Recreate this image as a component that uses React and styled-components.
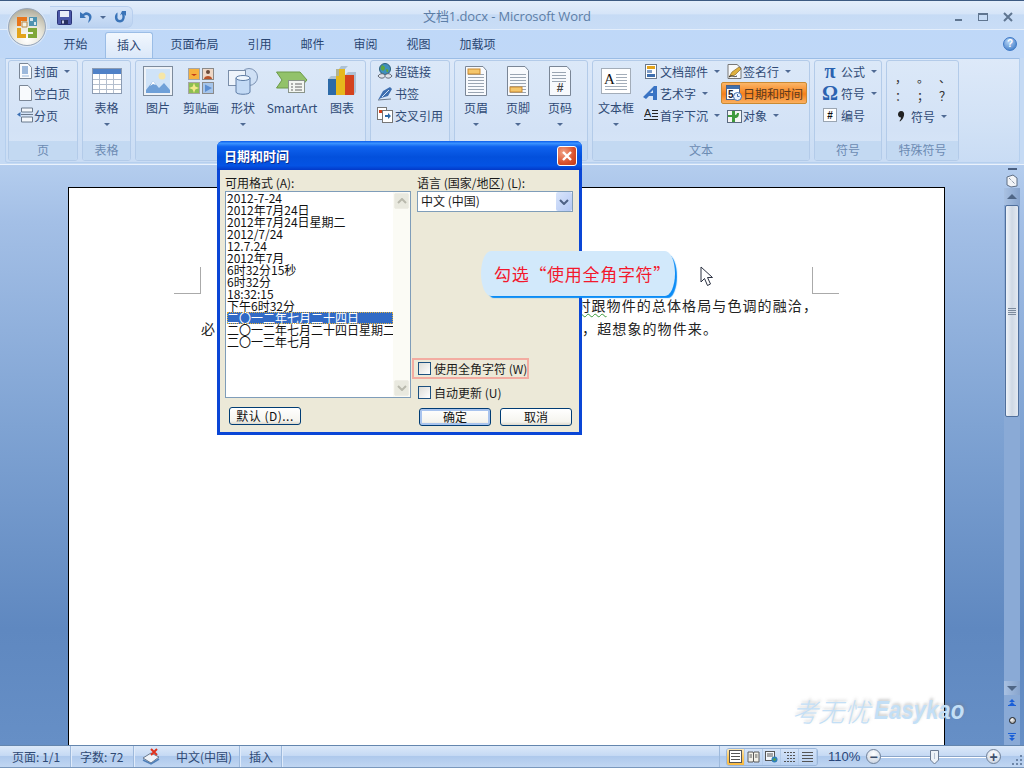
import React from "react";
import styled, { createGlobalStyle } from "styled-components";

const cjk = `"Noto Sans CJK SC", "Liberation Sans", sans-serif`;

const GlobalStyle = createGlobalStyle`
  html, body {
    margin: 0;
    padding: 0;
    overflow: hidden;
  }
  * {
    box-sizing: border-box;
  }
  body {
    font-family: ${cjk};
    font-size: 12px;
  }
`;

const Window = styled.div`
  position: relative;
  display: flex;
  flex-direction: column;
  width: 1024px;
  height: 768px;
  overflow: hidden;
  background: #c5daf4;
`;

/* title bar */
const TitleBar = styled.div`
  position: relative;
  display: flex;
  align-items: flex-start;
  height: 30px;
  padding-left: 50px;
  border-top: 1px solid #3c5a82;
  background: linear-gradient(#e3eefb, #d6e5f8 45%, #c6dbf5 50%, #c9ddf6);
  border-bottom: 1px solid #e4eefb;
`;
const OfficeButton = styled.div`
  position: absolute;
  left: 8px;
  top: 8px;
  width: 38px;
  height: 38px;
  border-radius: 50%;
  z-index: 3;
  display: flex;
  align-items: center;
  justify-content: center;
  background: radial-gradient(circle at 50% 85%, #ffffff, #e6e4d8 45%, #b9b5a5 80%, #8e8b80);
  border: 1px solid #9aa7b8;
  box-shadow: 0 0 0 1px #dbe7f6;
`;
const Qat = styled.div`
  display: flex;
  align-items: center;
  gap: 7px;
  width: 83px;
  height: 22px;
  margin-top: 5px;
  padding-left: 7px;
  border: 1px solid #b8cfee;
  border-left: none;
  border-radius: 0 6px 6px 0;
  background: linear-gradient(#d5e4f8, #bcd3f1);
`;
const TitleText = styled.div`
  position: absolute;
  left: 0;
  right: 0;
  top: 6px;
  padding-right: 10px;
  text-align: center;
  color: #5d7ea6;
  font-family: "Open Sans", ${cjk};
  font-size: 13px;
  line-height: 18px;
  letter-spacing: -0.1px;
`;
const WinControls = styled.div`
  position: absolute;
  right: 11px;
  top: 11px;
  display: flex;
  gap: 15px;
  align-items: center;
`;

/* tabs */
const TabRow = styled.div`
  position: relative;
  display: flex;
  align-items: flex-end;
  height: 28px;
  padding-left: 49px;
  background: linear-gradient(#bfd8f8, #c0d8f7);
`;
const Tab = styled.div`
  height: 26px;
  line-height: 23px;
  color: #2a4672;
  padding: 0 ${(p) => (p.$active ? "11px" : "14.5px")};
  margin: 0 ${(p) => (p.$active ? "3px" : "0")};
  ${(p) =>
    p.$active &&
    `
    background: linear-gradient(#f1f7fe, #dbe8f9);
    border: 1px solid #9bbde6;
    border-bottom: none;
    border-radius: 3px 3px 0 0;
  `}
`;
const HelpIcon = styled.div`
  position: absolute;
  right: 7px;
  top: 7px;
  width: 14px;
  height: 14px;
  border-radius: 50%;
  border: 1px solid #3d78c6;
  background: radial-gradient(circle at 40% 30%, #b8d6f7, #2f6fc0);
  color: #fff;
  font: bold 10px/12px "Liberation Sans", sans-serif;
  text-align: center;
`;

/* ribbon */
const Ribbon = styled.div`
  display: flex;
  gap: 4px;
  height: 105px;
  margin: 0 4px 0 5px;
  padding: 1px 0 0 2px;
  border: 1px solid #b5cfee;
  border-top-color: #9bbde6;
  border-radius: 0 0 3px 3px;
  background: linear-gradient(#dde9f9, #d2e2f6 60%, #c9dcf4);
`;
const Group = styled.div`
  display: flex;
  flex-direction: column;
  width: ${(p) => p.$w}px;
  height: 101px;
  border: 1px solid #b3cbe9;
  border-radius: 3px;
  background: linear-gradient(#dbe8f8, #d3e2f6 70%, #d8e6f8);
  overflow: hidden;
`;
const GroupBody = styled.div`
  flex: 1;
  display: flex;
`;
const GroupLabel = styled.div`
  height: 19px;
  line-height: 18px;
  text-align: center;
  background: #c3d9f2;
  color: #6c8bb2;
`;
const LargeBtn = styled.div`
  display: flex;
  flex-direction: column;
  align-items: center;
  width: ${(p) => p.$w}px;
  color: #2f4a75;
  flex-shrink: 0;
`;
const LargeIcon = styled.div`
  display: flex;
  align-items: center;
  justify-content: center;
  height: 40px;
`;
const LargeText = styled.div`
  height: 14px;
  line-height: 14px;
  white-space: nowrap;
`;
const Caret = styled.span`
  display: inline-block;
  width: 0;
  height: 0;
  border-left: 3px solid transparent;
  border-right: 3px solid transparent;
  border-top: 3px solid #4f6a94;
  margin-left: ${(p) => p.$ml ?? 0}px;
  margin-top: ${(p) => p.$mt ?? 0}px;
`;
const SmallCol = styled.div`
  display: flex;
  flex-direction: column;
  margin-top: -1px;
  padding-left: ${(p) => p.$pl ?? 0}px;
  width: ${(p) => (p.$w ? `${p.$w}px` : "auto")};
  flex-shrink: 0;
`;
const SmallBtn = styled.div`
  display: flex;
  align-items: center;
  height: 22px;
  color: #2f4a75;
  white-space: nowrap;
  ${(p) =>
    p.$hot &&
    `
    margin-left: -4px;
    padding-left: 3px;
    border: 1px solid #c98a33;
    border-radius: 2px;
    background: linear-gradient(#fbb668, #f88a28 45%, #f57f1c 55%, #fbb060);
    color: #5b3a20;
  `}
`;
const SmallIcon = styled.span`
  display: inline-flex;
  align-items: center;
  justify-content: center;
  width: ${(p) => p.$w ?? 18}px;
  margin-right: ${(p) => p.$mr ?? 0}px;
  flex-shrink: 0;
`;
const SymbolGlyph = styled.span`
  display: inline-block;
  width: 18px;
  text-align: center;
  color: #2a62b0;
  font: bold 20px/20px "Liberation Serif", serif;
`;
const PunctGrid = styled.div`
  display: grid;
  grid-template-columns: repeat(3, 22px);
  grid-auto-rows: 18px;
  padding: 9px 0 0 0;
  color: #333;
  font: 12px/18px "Noto Sans CJK SC", sans-serif;
  text-align: center;
`;

/* workspace */
const Workspace = styled.div`
  flex: 1;
  display: flex;
  min-height: 0;
  margin-top: 1px;
  border-top: 1px solid #eaf2fc;
  background: linear-gradient(#b4cdee, #a3bfe6 10%, #7fa3d3 45%, #5f88c0 80%, #668fc6);
`;
const Page = styled.div`
  width: 877px;
  margin: 22px 0 0 68px;
  padding-top: 79px;
  border: 1px solid #000;
  border-bottom: none;
  background: #fff;
  color: #222;
`;
const CropRow = styled.div`
  display: flex;
  justify-content: space-between;
  padding: 0 105px;
`;
const CropMark = styled.div`
  width: 27px;
  height: 27px;
  border-bottom: 1px solid #aaa;
  border-${(p) => p.$side}: 1px solid #aaa;
`;
const BodyText = styled.div`
  padding: 0 132px;
  font-size: 14px;
  line-height: 23px;
  letter-spacing: 1.1px;
`;
const LineRight = styled.div`
  text-align: right;
  margin-right: -6px;
  white-space: nowrap;
`;
const LineSplit = styled.div`
  display: flex;
  justify-content: space-between;
  padding-right: 94px;
  white-space: nowrap;
`;
const Squiggle = styled.span`
  text-decoration: underline wavy #3a9a3a 1px;
  text-underline-offset: 2px;
`;

/* word scrollbar */
const ScrollCol = styled.div`
  display: flex;
  flex-direction: column;
  align-items: center;
  width: 16px;
  margin: 0 4px 0 auto;
`;
const SplitHandle = styled.div`
  width: 9px;
  height: 2px;
  margin-top: 3px;
  background: #4a5f80;
`;
const RulerToggle = styled.div`
  margin-top: 4px;
  height: 14px;
`;
const ScrollBtn = styled.div`
  display: flex;
  align-items: center;
  justify-content: center;
  width: 16px;
  height: ${(p) => p.$h}px;
  background: linear-gradient(90deg, #a9c1e2, #87a4cd);
`;
const Triangle = styled.span`
  width: 0;
  height: 0;
  border-left: 5px solid transparent;
  border-right: 5px solid transparent;
  ${(p) => (p.$down ? "border-top" : "border-bottom")}: 5px solid #4f6686;
`;
const ScrollTrack = styled.div`
  flex: 1;
  width: 16px;
  background: #8aaad6;
  display: flex;
  flex-direction: column;
`;
const ScrollThumb = styled.div`
  display: flex;
  align-items: center;
  justify-content: center;
  height: 212px;
  margin: 0 1px;
  border: 1px solid #4f6f9c;
  border-radius: 2px;
  background: linear-gradient(90deg, #eef3f9, #cfd8e4 50%, #e3e9f1);
`;
const Grip = styled.div`
  width: 8px;
  height: 7px;
  background: repeating-linear-gradient(#7c8a9c 0 1px, transparent 1px 2px);
`;
const BrowseCol = styled.div`
  display: flex;
  flex-direction: column;
  align-items: center;
  justify-content: space-between;
  height: 50px;
  width: 16px;
  padding: 3px 0 3px;
  background: #8aaad6;
`;
const Ball = styled.div`
  width: 7px;
  height: 7px;
  border-radius: 50%;
  border: 1px solid #222;
  background: radial-gradient(circle at 35% 30%, #fff, #888);
`;

/* status bar */
const StatusBar = styled.div`
  display: flex;
  align-items: center;
  height: 23px;
  padding-left: 3px;
  border-top: 1px solid #6486ae;
  border-bottom: 1px solid #7a98bd;
  background: linear-gradient(#dbe8f9, #c6daf4 45%, #aec9ec 50%, #c1d6f2);
  color: #2f4a75;
`;
const StatusCell = styled.div`
  display: flex;
  align-items: center;
  width: ${(p) => p.$w}px;
  height: 21px;
  padding-left: ${(p) => p.$pl ?? 9}px;
  border-right: 1px solid #9db9dc;
  box-shadow: 1px 0 0 #e0ebfa;
  white-space: nowrap;
`;
const StatusRight = styled.div`
  display: flex;
  align-items: center;
  height: 21px;
  margin-left: auto;
  padding-left: 6px;
  width: 305px;
  border-left: 1px solid #9db9dc;
`;
const ViewGroup = styled.div`
  display: flex;
  height: 18px;
  border: 1px solid #9ab6da;
  border-radius: 3px;
  overflow: hidden;
`;
const ViewBtn = styled.div`
  display: flex;
  align-items: center;
  justify-content: center;
  width: 18px;
  border-right: 1px solid #b3cbe9;
  background: ${(p) =>
    p.$on ? "linear-gradient(#fde9b8, #fbc85f 50%, #f9b93f)" : "linear-gradient(#d5e4f8, #b8d0f0)"};
`;
const ZoomLabel = styled.div`
  width: 48px;
  padding-left: 10px;
  color: #29477a;
  font: 13px "Liberation Sans", sans-serif;
`;
const ZoomRound = styled.div`
  display: flex;
  align-items: center;
  justify-content: center;
  flex-shrink: 0;
  width: 15px;
  height: 15px;
  border: 1px solid #6f8098;
  border-radius: 50%;
  background: radial-gradient(circle at 50% 30%, #fff, #c3cede);
  color: #3d4f6b;
  font: bold 14px/12px "Liberation Sans", sans-serif;
`;
const ZoomTrack = styled.div`
  position: relative;
  width: 105px;
  height: 2px;
  flex-shrink: 0;
  background: #fff;
  border-top: 1px solid #8ba6c9;
`;
const ZoomThumb = styled.div`
  position: absolute;
  left: 49px;
  top: -7px;
`;
const ResizeGrip = styled.div`
  margin-left: 10px;
  margin-top: 6px;
`;

/* dialog */
const Dialog = styled.div`
  position: absolute;
  left: 217px;
  top: 141px;
  width: 365px;
  height: 294px;
  display: flex;
  flex-direction: column;
  z-index: 5;
  border-radius: 6px 6px 0 0;
  background: #0a46d6;
  padding: 0 3px 3px;
  font-family: ${cjk};
`;
const DialogTitle = styled.div`
  display: flex;
  align-items: center;
  justify-content: space-between;
  height: 29px;
  margin: 0 -3px;
  padding: 0 5px 0 7px;
  border-radius: 6px 6px 0 0;
  background: linear-gradient(#0a5cec, #3a93ff 8%, #0f62ee 20%, #0350dc 55%, #0453e4 85%, #0339c8);
  color: #fff;
  font-size: 13px;
  font-weight: 700;
  text-shadow: 1px 1px 0 #0b2c8c;
`;
const CloseBtn = styled.div`
  display: flex;
  align-items: center;
  justify-content: center;
  width: 20px;
  height: 20px;
  border: 1px solid #fff;
  border-radius: 3px;
  background: radial-gradient(circle at 30% 30%, #f2a285, #d8502c 60%, #c03a18);
`;
const DialogBody = styled.div`
  flex: 1;
  display: flex;
  gap: 6px;
  padding: 6px 0 0 5px;
  background: #ece9d8;
  color: #1a1a1a;
`;
const LeftCol = styled.div`
  width: 186px;
  flex-shrink: 0;
`;
const RightCol = styled.div`
  width: 156px;
  flex-shrink: 0;
`;
const FieldLabel = styled.div`
  height: 15px;
  line-height: 14px;
  white-space: nowrap;
`;
const ListBox = styled.div`
  display: flex;
  height: 207px;
  border: 1px solid #7f9db9;
  background: #fff;
`;
const ListItems = styled.div`
  flex: 1;
  min-width: 0;
  padding-left: 1px;
  overflow-x: clip;
`;
const ListItem = styled.div`
  height: 12px;
  line-height: 11px;
  white-space: nowrap;
  color: ${(p) => (p.$sel ? "#fff" : "#111")};
  background: ${(p) => (p.$sel ? "#316ac5" : "transparent")};
  outline: ${(p) => (p.$sel ? "1px dotted #e0b040" : "none")};
  outline-offset: -1px;
`;
const ListScroll = styled.div`
  display: flex;
  flex-direction: column;
  justify-content: space-between;
  width: 17px;
  padding: 1px;
  background: #fbfbf5;
`;
const ListScrollBtn = styled.div`
  display: flex;
  align-items: center;
  justify-content: center;
  height: 16px;
  border: 1px solid #eeede5;
  border-radius: 2px;
  background: #e9e9df;
`;
const SelectBox = styled.div`
  display: flex;
  align-items: center;
  justify-content: space-between;
  height: 21px;
  padding: 0 0 2px 3px;
  border: 1px solid #7f9db9;
  background: #fff;
`;
const SelectArrow = styled.div`
  display: flex;
  align-items: center;
  justify-content: center;
  width: 16px;
  height: 19px;
  margin-bottom: -2px;
  border-radius: 2px;
  background: linear-gradient(135deg, #d9e5fb, #b3c8f4);
`;
const CheckRow = styled.div`
  display: flex;
  align-items: center;
  height: ${(p) => (p.$mark ? 21 : 14)}px;
  width: ${(p) => (p.$mark ? "117px" : "auto")};
  margin: ${(p) => (p.$mark ? "146px 0 0 -5px" : "6px 0 0 1px")};
  padding-left: ${(p) => (p.$mark ? 4 : 0)}px;
  border: ${(p) => (p.$mark ? "2px solid #f3aca1" : "none")};
  white-space: nowrap;
`;
const CheckBox = styled.span`
  width: 13px;
  height: 13px;
  margin-right: 3px;
  flex-shrink: 0;
  border: 1px solid #1c5180;
  background: linear-gradient(135deg, #dcdcd7, #fff);
`;
const ButtonRow = styled.div`
  display: flex;
  gap: 9px;
  margin: 9px 0 0 2px;
`;
const DlgButton = styled.div`
  width: 72px;
  height: 18px;
  line-height: 15px;
  text-align: center;
  border: 1px solid #003c74;
  border-radius: 3px;
  color: #111;
  background: linear-gradient(#fff, #f5f4ee 80%, #dcd8cc);
  box-shadow: ${(p) => (p.$primary ? "inset 0 0 0 2px #a9c4ee" : "none")};
`;
const DefaultButton = styled(DlgButton)`
  margin: 9px 0 0 4px;
  letter-spacing: 0.5px;
`;

/* overlay on dialog */
const Callout = styled.div`
  position: absolute;
  left: 481px;
  top: 251px;
  width: 194px;
  height: 45px;
  z-index: 6;
  display: flex;
  align-items: center;
  padding-left: 13px;
  border-radius: 10px / 50%;
  background: #d2e9fb;
  box-shadow: 3px 3px 1px -1px #0b8cf6;
  color: #f3182c;
  font-size: 17px;
  letter-spacing: 0.7px;
  white-space: nowrap;
`;
const Cursor = styled.div`
  position: absolute;
  left: 700px;
  top: 266px;
  z-index: 6;
`;
const Watermark = styled.div`
  position: absolute;
  left: 792px;
  top: 692px;
  z-index: 4;
  display: flex;
  align-items: center;
  gap: 4px;
  color: #c3dff6;
  white-space: nowrap;
  text-shadow: 1px -2px 3px rgba(120, 120, 120, 0.35);
`;
const WmCn = styled.span`
  font-size: 26px;
  font-style: italic;
  font-weight: 300;
`;
const WmEn = styled.span`
  display: inline-block;
  font: italic bold 25px "Liberation Sans", sans-serif;
  transform: scaleX(0.89);
  transform-origin: left center;
`;

/* icons */
const Ico = ({ w, h = w, children }) => (
  <svg width={w} height={h} viewBox={`0 0 ${w} ${h}`} style={{ display: "block" }}>
    {children}
  </svg>
);

const Sheet = ({ w = 13, h = 16, children }) => (
  <Ico w={w} h={h}>
    <path d={`M.5.5H${w - 4}L${w - 0.5} 4.5V${h - 0.5}H.5Z`} fill="#f8fafd" stroke="#7a8696" />
    {children}
  </Ico>
);

const OfficeLogo = () => (
  <Ico w={28}>
    <path d="M4 4H14V8H8V13H4Z" fill="#e8761c" />
    <path d="M4 15H8V21H13V25H4Z" fill="#e3a41c" />
    <path d="M15 15H24V25H15V21H20V19H15Z" fill="#7fa83a" />
    <rect x="16" y="4" width="8" height="9" fill="#4f93b0" />
    <path d="M17 5h3v3h-3zM21 9h2v3h-2z" fill="#d8e8ee" />
    <path d="M9 9H14V14H9Z" fill="#f4f1e6" stroke="#b98b4c" />
  </Ico>
);

const SaveIcon = () => (
  <Ico w={15}>
    <rect x=".5" y=".5" width="14" height="14" rx="1" fill="#4b57a8" stroke="#2b3478" />
    <rect x="3" y="1" width="9" height="6" fill="#e8ecf8" />
    <rect x="4" y="10" width="7" height="4" fill="#27305f" />
    <rect x="5" y="10.5" width="2" height="3" fill="#c4cbe6" />
  </Ico>
);
const UndoIcon = () => (
  <Ico w={14}>
    <path d="M1 2V8H7L5 6C7 4 11 5 10 9L9 13C13 10 14 5 10 3 8 2 6 2 4 4Z" fill="#3a74b8" />
  </Ico>
);
const RedoIcon = () => (
  <Ico w={14}>
    <path d="M9 1L13 1V6L11.500 4.500C12.500 8 11 12.500 7 12.500 3 12.500 1.500 9 2 6 2.500 4 3.500 3 4.500 2.500V6C4 8 5 10 7 10 9.500 10 10 6.500 8.800 4L7 5.500Z" fill="#3a74b8" />
  </Ico>
);

const CoverIcon = () => (
  <Sheet>
    <rect x="3" y="3" width="6" height="8" fill="#9db9dc" />
    <path d="M3 13H10" stroke="#9db9dc" />
  </Sheet>
);
const BlankIcon = () => <Sheet />;
const BreakIcon = () => (
  <Ico w={16}>
    <path d="M4.500 1H15.500V5H4.500ZM4.500 10H15.500V15H4.500Z" fill="#f4f7fb" stroke="#6b7a8d" />
    <path d="M4 7.500H16" stroke="#6b7a8d" />
    <path d="M0 7.500L3.500 5V10Z" fill="#3b6fb2" />
  </Ico>
);
const TableIcon = () => (
  <Ico w={30} h={26}>
    <rect x=".5" y=".5" width="29" height="25" fill="#fff" stroke="#8c9cb3" />
    <rect x="1" y="1" width="28" height="5" fill="#4f81c7" />
    {[7, 14, 21].map((x) => (
      <path key={x} d={`M${x + 0.5} 6V25`} stroke="#b4bfce" />
    ))}
    {[11, 16, 21].map((y) => (
      <path key={y} d={`M1 ${y + 0.5}H29`} stroke="#b4bfce" />
    ))}
  </Ico>
);
const PictureIcon = () => (
  <Ico w={30}>
    <rect x=".5" y=".5" width="29" height="29" fill="#eef2f7" stroke="#7d8b9c" />
    <rect x="3" y="3" width="24" height="24" fill="#cfe3f8" />
    <circle cx="19" cy="10" r="3.500" fill="#f6e6a8" />
    <path d="M3 24L10 15 16 22 21 17 27 24V27H3Z" fill="#6fa0d8" />
    <path d="M7 20L10 15 13 19 10 18Z" fill="#fff" />
  </Ico>
);
const ClipIcon = () => (
  <Ico w={26}>
    <rect x=".5" y=".5" width="11" height="11" fill="#f6b13e" stroke="#a5a5a5" />
    <path d="M3 6H9L6 8Z" fill="#c23d1a" />
    <rect x="14.500" y=".5" width="11" height="11" fill="#eed7c6" stroke="#8a8a8a" />
    <circle cx="20" cy="4" r="2" fill="#6b4a3a" />
    <path d="M16 11C16 7 24 7 24 11Z" fill="#b8532a" />
    <rect x=".5" y="14.500" width="11" height="11" fill="#8ebf52" stroke="#a5a5a5" />
    <path d="M6 15L8 20 6 25 4 20Z M1 20L6 18 11 20 6 22Z" fill="#f3e88a" />
    <rect x="14.500" y="14.500" width="11" height="11" fill="#a6c5ea" stroke="#8a8a8a" />
    <path d="M17 16.500L24 20 17 24Z" fill="#5d8fd2" />
  </Ico>
);
const ShapesIcon = () => (
  <Ico w={30} h={28}>
    <circle cx="21" cy="10" r="8.500" fill="#cfe0f5" stroke="#7d93b3" />
    <rect x=".5" y="3.500" width="17" height="15" fill="#eef4fb" stroke="#7a8ea9" />
    <path d="M8 11V25C8 28 22 28 22 25V11Z" fill="#c3daf5" stroke="#5e7da6" />
    <ellipse cx="15" cy="11" rx="7" ry="2.500" fill="#eef6fe" stroke="#5e7da6" />
  </Ico>
);
const SmartArtIcon = () => (
  <Ico w={32} h={26}>
    <path d="M.5 4H24L31 12 24 20H.5L6 12Z" fill="#92c26a" stroke="#6c9a48" />
    <rect x="12.500" y="12.500" width="16" height="12" fill="#f3f6f1" stroke="#8a948a" />
    <path d="M15 16h2M19 16h7M15 19h2M19 19h7M15 22h2M19 22h7" stroke="#666" />
  </Ico>
);
const ChartIcon = () => (
  <Ico w={28} h={30}>
    <rect x="0" y="13" width="8" height="16" fill="#2c6aa8" />
    <rect x="8" y="3" width="9" height="26" fill="#e6b81c" />
    <rect x="17" y="9" width="9" height="20" fill="#d4421e" />
    <path d="M0 13L3 10H11V3L13 0H20L17 3H8V13ZM17 9L20 6H28L26 9ZM26 9L28 6V26L26 29Z" fill="#9ab0c4" opacity=".7" />
  </Ico>
);
const GlobeIcon = () => (
  <Ico w={16}>
    <circle cx="8" cy="6" r="5.500" fill="#3e8fbd" stroke="#2b5f7c" />
    <path d="M5 2C8 3 9 5 7 7 6 9 4 7 3.500 5ZM9 6C11 6 12 7 11 9 10 10 9 8 9 6Z" fill="#5ca53f" />
    <path d="M1 13C3 10 7 10 8 12.500 9.500 10 13 10 15 13 13 16 9.500 15.500 8 13.500 7 15.500 3 16 1 13Z" fill="#dfe3ea" stroke="#5a6270" />
  </Ico>
);
const BookmarkIcon = () => (
  <Ico w={16}>
    <path d="M1 15L6 6 13 2 15 4 11 11 4 13Z" fill="#3e6fb0" />
    <path d="M5 12L12 5" stroke="#cfe0f5" />
    <path d="M1 15L14 14" stroke="#6b7a8d" />
  </Ico>
);
const CrossRefIcon = () => (
  <Ico w={16}>
    <rect x=".5" y=".5" width="9" height="12" fill="#fff" stroke="#777" />
    <rect x="5.500" y="3.500" width="10" height="12" fill="#fff" stroke="#777" />
    <path d="M2 3h3v3H2z" fill="#d4421e" />
    <path d="M8 8H11V6L14 9 11 12V10H8Z" fill="#2c6aa8" />
  </Ico>
);
const HeaderIcon = ({ band }) => (
  <Sheet w={22} h={30}>
    {[8, 11, 14, 17, 20, 23, 26].map((y) => (
      <path key={y} d={`M3 ${y + 0.5}H19`} stroke="#9aa5b2" />
    ))}
    <rect x="3" y={band} width="12" height="5" fill="#f5c66b" stroke="#c98a33" />
  </Sheet>
);
const PageNumIcon = () => (
  <Sheet w={22} h={30}>
    {[6, 9, 12, 15].map((y) => (
      <path key={y} d={`M3 ${y + 0.5}H17`} stroke="#9aa5b2" />
    ))}
    <text x="11" y="26" textAnchor="middle" fontSize="12" fontWeight="700" fill="#444" fontFamily="Liberation Sans">
      #
    </text>
  </Sheet>
);
const TextBoxIcon = () => (
  <Ico w={30} h={26}>
    <rect x=".5" y=".5" width="29" height="25" fill="#fff" stroke="#a3adb9" />
    <text x="3" y="16" fontSize="15" fontFamily="Liberation Serif" fill="#111">
      A
    </text>
    {[6, 9, 12, 15, 18, 21].map((y) => (
      <path key={y} d={`M${y > 15 ? 4 : 15} ${y + 0.5}H26`} stroke="#a3adb9" />
    ))}
  </Ico>
);
const QuickPartsIcon = () => (
  <Ico w={12} h={15}>
    <rect x=".5" y=".5" width="11" height="14" fill="#fff" stroke="#6b7a8d" />
    <rect x="2" y="2" width="8" height="3" fill="#e3a41c" />
    <rect x="2" y="6" width="5" height="3" fill="#7f9ec8" />
    <rect x="2" y="10" width="8" height="3" fill="#3f6fae" />
  </Ico>
);
const WordArtIcon = () => (
  <Ico w={16}>
    <path d="M0 12L11 1H14V15H10V11H6L3 14ZM10 8V5L7 8Z" fill="#3a74c4" />
  </Ico>
);
const DropCapIcon = () => (
  <Ico w={14}>
    <text x="0" y="9" fontSize="11" fontFamily="Liberation Sans" fill="#222">
      A
    </text>
    <path d="M8 2.500H14M8 5.500H14M8 8.500H14M0 11.500H14M0 14.500H14" stroke="#222" />
  </Ico>
);
const SignIcon = () => (
  <Ico w={15}>
    <path d="M1 .5H10L14 4V14.500H1Z" fill="#f7f9fb" stroke="#777" />
    <path d="M2 13L5 8 12 3 14 5 8 11Z" fill="#dfb13f" stroke="#7a5a18" strokeWidth=".6" />
    <path d="M2 13C5 10 6 14 10 12" stroke="#333" fill="none" />
  </Ico>
);
const DateIcon = () => (
  <Ico w={16}>
    <rect x=".5" y=".5" width="13" height="14" fill="#fff" stroke="#48628a" />
    <rect x="1" y="1" width="12" height="3" fill="#3f6fae" />
    <text x="2" y="13" fontSize="10" fontWeight="700" fontFamily="Liberation Sans" fill="#223">
      5
    </text>
    <circle cx="11.500" cy="11.500" r="4" fill="#e9f1fb" stroke="#3f6fae" />
    <path d="M11.500 9V11.500H13.500" stroke="#3f6fae" fill="none" />
  </Ico>
);
const ObjectIcon = () => (
  <Ico w={15}>
    <rect x=".5" y="2.500" width="14" height="12" fill="#f4f4f4" stroke="#5a6a80" />
    <path d="M5 3V7H1V9H5V14H8V10C11 10 12 8 12 5H10C10 6 9 7 8 7V3Z" fill="#3f9a3c" />
  </Ico>
);
const NumberIcon = () => (
  <Ico w={14}>
    <rect x=".5" y=".5" width="13" height="13" fill="#fff" stroke="#9aa5b2" />
    <text x="7" y="11" textAnchor="middle" fontSize="10" fontWeight="700" fontFamily="Liberation Sans" fill="#111">
      #
    </text>
  </Ico>
);
const CommaMark = () => (
  <Ico w={8} h={12}>
    <path d="M4 1C6.500 1 7.500 3 7 5.500 6.500 8 5 10 3 11.500L2.500 11C3.500 9.500 4 8.500 4 7.500 2 7.500 1 6 1 4.500 1 2.500 2.500 1 4 1Z" fill="#222" />
  </Ico>
);
const Chevron = ({ color = "#4d6185", up }) => (
  <Ico w={10} h={6}>
    <path d={up ? "M1 5L5 1 9 5" : "M1 1L5 5 9 1"} stroke={color} strokeWidth="2" fill="none" />
  </Ico>
);
const CloseX = () => (
  <Ico w={12}>
    <path d="M2 2L10 10M10 2L2 10" stroke="#fff" strokeWidth="2.400" />
  </Ico>
);
const RulerIcon = () => (
  <Ico w={12} h={14}>
    <path d="M1 3L7 1 11 4 11 12 5 13 1 11Z" fill="#f2f4f7" stroke="#5f6e84" />
    <path d="M3 4L9 10" stroke="#5f6e84" strokeDasharray="1 1" />
  </Ico>
);
const DoubleArrow = ({ down }) => (
  <Ico w={10} h={9}>
    <path
      d={down ? "M1 0H9V1H1ZM2 2H8L5 5ZM2 5H8L5 8Z" : "M2 4H8L5 1ZM1 8H9V7H1Z M2 7H8L5 4Z"}
      fill="#1a5fd8"
    />
  </Ico>
);
const SpellIcon = () => (
  <Ico w={18}>
    <path d="M1 10L9 5 17 9 9 15Z" fill="#eef2f8" stroke="#6b7a8d" />
    <path d="M1 12L9 16 17 11" stroke="#4f7fb8" fill="none" strokeWidth="1.500" />
    <path d="M9 1L15 7M15 1L9 7" stroke="#e0321c" strokeWidth="2" />
  </Ico>
);
const ViewLines = ({ kind }) => (
  <Ico w={13} h={13}>
    {kind === "book" ? (
      <>
        <path d="M1 2H6L6.500 3 7 2H12V12H7L6.500 11 6 12H1Z" fill="#f3f1e8" stroke="#5a5a5a" />
        <path d="M6.500 3V11M2.500 5H5M2.500 7H5M8 5H10.500M8 7H10.500" stroke="#5a5a5a" />
      </>
    ) : kind === "web" ? (
      <>
        <rect x=".5" y="1.500" width="9" height="9" fill="#f4f7fb" stroke="#555" />
        <path d="M2 4H8M2 6H8" stroke="#555" />
        <circle cx="9.500" cy="9.500" r="3" fill="#2f80b8" />
        <path d="M8 9L10 8 11 10 9 11Z" fill="#5ca53f" />
      </>
    ) : kind === "outline" ? (
      <path d="M1 2.500H12M4 5.500H12M4 8.500H12M1 11.500H12" stroke="#555" strokeDasharray="2 1" />
    ) : kind === "draft" ? (
      <path d="M1 2.500H12M1 5.500H12M1 8.500H12M1 11.500H12" stroke="#555" />
    ) : (
      <>
        <rect x=".5" y=".5" width="12" height="12" fill="#fff" stroke="#555" />
        <path d="M2 3.500H11M2 6.500H11M2 9.500H11" stroke="#555" />
      </>
    )}
  </Ico>
);
const SliderThumb = () => (
  <Ico w={9} h={15}>
    <path d="M.5.5H8.500V10L4.500 14 .5 10Z" fill="#eef3f9" stroke="#6a7a92" />
    <path d="M4.500 3V9" stroke="#b6c2d3" />
  </Ico>
);
const GripDots = () => (
  <Ico w={12} h={12}>
    {[
      [9, 1],
      [5, 5],
      [9, 5],
      [1, 9],
      [5, 9],
      [9, 9],
    ].map(([x, y]) => (
      <rect key={`${x}-${y}`} x={x} y={y} width="2" height="2" fill="#6d86a8" />
    ))}
  </Ico>
);
const Arrow = () => (
  <Ico w={14} h={21}>
    <path d="M1 1V16L4.500 12.500 7.500 19.500 10.500 18 7.500 11.500H12.500Z" fill="#fff" stroke="#2a3040" />
  </Ico>
);

const tabs = ["开始", "插入", "页面布局", "引用", "邮件", "审阅", "视图", "加载项"];
const formats = [
  "2012-7-24",
  "2012年7月24日",
  "2012年7月24日星期二",
  "2012/7/24",
  "12.7.24",
  "2012年7月",
  "6时32分15秒",
  "6时32分",
  "18:32:15",
  "下午6时32分",
  "二〇一二年七月二十四日",
  "二〇一二年七月二十四日星期二",
  "二〇一二年七月",
];

function Large({ w = 42, icon, label, caret }) {
  return (
    <LargeBtn $w={w}>
      <LargeIcon>{icon}</LargeIcon>
      <LargeText>{label}</LargeText>
      {caret && <Caret $mt={8} />}
    </LargeBtn>
  );
}

function Small({ icon, label, caret, hot, iconW, iconMr, caretMl = 6 }) {
  return (
    <SmallBtn $hot={hot}>
      <SmallIcon $w={iconW} $mr={iconMr}>
        {icon}
      </SmallIcon>
      {label}
      {caret && <Caret $ml={caretMl} />}
    </SmallBtn>
  );
}

function RibbonBar() {
  return (
    <Ribbon>
      <Group $w={70}>
        <GroupBody>
          <SmallCol $pl={7}>
            <Small icon={<CoverIcon />} label="封面" caret />
            <Small icon={<BlankIcon />} label="空白页" />
            <Small icon={<BreakIcon />} label="分页" />
          </SmallCol>
        </GroupBody>
        <GroupLabel>页</GroupLabel>
      </Group>
      <Group $w={49}>
        <GroupBody>
          <Large w={47} icon={<TableIcon />} label="表格" caret />
        </GroupBody>
        <GroupLabel>表格</GroupLabel>
      </Group>
      <Group $w={231}>
        <GroupBody>
          <Large w={44} icon={<PictureIcon />} label="图片" />
          <Large icon={<ClipIcon />} label="剪贴画" />
          <Large icon={<ShapesIcon />} label="形状" caret />
          <Large w={56} icon={<SmartArtIcon />} label="SmartArt" />
          <Large w={44} icon={<ChartIcon />} label="图表" />
        </GroupBody>
        <GroupLabel />
      </Group>
      <Group $w={80}>
        <GroupBody>
          <SmallCol $pl={5}>
            <Small icon={<GlobeIcon />} label="超链接" iconMr={1} />
            <Small icon={<BookmarkIcon />} label="书签" iconMr={1} />
            <Small icon={<CrossRefIcon />} label="交叉引用" iconMr={1} />
          </SmallCol>
        </GroupBody>
        <GroupLabel />
      </Group>
      <Group $w={134}>
        <GroupBody>
          <Large icon={<HeaderIcon band={3} />} label="页眉" caret />
          <Large icon={<HeaderIcon band={21} />} label="页脚" caret />
          <Large icon={<PageNumIcon />} label="页码" caret />
        </GroupBody>
        <GroupLabel />
      </Group>
      <Group $w={218}>
        <GroupBody>
          <Large w={46} icon={<TextBoxIcon />} label="文本框" caret />
          <SmallCol $w={86} $pl={2}>
            <Small icon={<QuickPartsIcon />} label="文档部件" caret iconW={19} />
            <Small icon={<WordArtIcon />} label="艺术字" caret iconW={19} />
            <Small icon={<DropCapIcon />} label="首字下沉" caret iconW={19} />
          </SmallCol>
          <SmallCol $w={82}>
            <Small icon={<SignIcon />} label="签名行" caret />
            <Small icon={<DateIcon />} label="日期和时间" hot />
            <Small icon={<ObjectIcon />} label="对象" caret />
          </SmallCol>
        </GroupBody>
        <GroupLabel>文本</GroupLabel>
      </Group>
      <Group $w={68}>
        <GroupBody>
          <SmallCol $pl={6}>
            <Small icon={<SymbolGlyph>π</SymbolGlyph>} label="公式" caret iconMr={2} />
            <Small icon={<SymbolGlyph>Ω</SymbolGlyph>} label="符号" caret iconMr={2} />
            <Small icon={<NumberIcon />} label="编号" iconMr={2} />
          </SmallCol>
        </GroupBody>
        <GroupLabel>符号</GroupLabel>
      </Group>
      <Group $w={73}>
        <GroupBody>
          <SmallCol $pl={3}>
            <PunctGrid>
              {["，", "。", "、", "：", "；", "？"].map((c) => (
                <span key={c}>{c}</span>
              ))}
            </PunctGrid>
            <Small icon={<CommaMark />} label="符号" caret iconW={21} />
          </SmallCol>
        </GroupBody>
        <GroupLabel>特殊符号</GroupLabel>
      </Group>
    </Ribbon>
  );
}

function DateDialog() {
  return (
    <Dialog>
      <DialogTitle>
        日期和时间
        <CloseBtn>
          <CloseX />
        </CloseBtn>
      </DialogTitle>
      <DialogBody>
        <LeftCol>
          <FieldLabel>可用格式 (A):</FieldLabel>
          <ListBox>
            <ListItems>
              {formats.map((f, i) => (
                <ListItem key={f} $sel={i === 10}>
                  {f}
                </ListItem>
              ))}
            </ListItems>
            <ListScroll>
              <ListScrollBtn>
                <Chevron color="#b9b9ad" up />
              </ListScrollBtn>
              <ListScrollBtn>
                <Chevron color="#b9b9ad" />
              </ListScrollBtn>
            </ListScroll>
          </ListBox>
          <DefaultButton>默认 (D)...</DefaultButton>
        </LeftCol>
        <RightCol>
          <FieldLabel>语言 (国家/地区) (L):</FieldLabel>
          <SelectBox>
            中文 (中国)
            <SelectArrow>
              <Chevron />
            </SelectArrow>
          </SelectBox>
          <CheckRow $mark>
            <CheckBox />
            使用全角字符 (W)
          </CheckRow>
          <CheckRow>
            <CheckBox />
            自动更新 (U)
          </CheckRow>
          <ButtonRow>
            <DlgButton $primary>确定</DlgButton>
            <DlgButton>取消</DlgButton>
          </ButtonRow>
        </RightCol>
      </DialogBody>
    </Dialog>
  );
}

export default function App() {
  return (
    <Window>
      <GlobalStyle />
      <OfficeButton>
        <OfficeLogo />
      </OfficeButton>
      <TitleBar>
        <Qat>
          <SaveIcon />
          <UndoIcon />
          <Caret />
          <RedoIcon />
        </Qat>
        <TitleText>文档1.docx - Microsoft Word</TitleText>
        <WinControls>
          <Ico w={9}>
            <rect x="1" y="6" width="7" height="2" fill="#5f7590" />
          </Ico>
          <Ico w={10}>
            <rect x=".5" y="1.500" width="9" height="7" fill="none" stroke="#5f7590" />
            <rect x="1" y="1" width="8" height="2" fill="#5f7590" />
          </Ico>
          <Ico w={10}>
            <path d="M1 1L9 9M9 1L1 9" stroke="#5f7590" strokeWidth="2" />
          </Ico>
        </WinControls>
      </TitleBar>
      <TabRow>
        {tabs.map((t) => (
          <Tab key={t} $active={t === "插入"}>
            {t}
          </Tab>
        ))}
        <HelpIcon>?</HelpIcon>
      </TabRow>
      <RibbonBar />
      <Workspace>
        <Page>
          <CropRow>
            <CropMark $side="right" />
            <CropMark $side="left" />
          </CropRow>
          <BodyText>
            <LineRight>
              <Squiggle>时跟</Squiggle>物件的总体格局与色调的融洽，
            </LineRight>
            <LineSplit>
              <span>必</span>
              <span>，超想象的物件来。</span>
            </LineSplit>
          </BodyText>
        </Page>
        <ScrollCol>
          <SplitHandle />
          <RulerToggle>
            <RulerIcon />
          </RulerToggle>
          <ScrollBtn $h={17}>
            <Triangle />
          </ScrollBtn>
          <ScrollTrack>
            <ScrollThumb>
              <Grip />
            </ScrollThumb>
          </ScrollTrack>
          <ScrollBtn $h={14}>
            <Triangle $down />
          </ScrollBtn>
          <BrowseCol>
            <DoubleArrow />
            <Ball />
            <DoubleArrow down />
          </BrowseCol>
        </ScrollCol>
      </Workspace>
      <StatusBar>
        <StatusCell $w={68}>页面: 1/1</StatusCell>
        <StatusCell $w={63}>字数: 72</StatusCell>
        <StatusCell $w={106} $pl={8}>
          <SmallIcon $w={18} $mr={16}>
            <SpellIcon />
          </SmallIcon>
          中文(中国)
        </StatusCell>
        <StatusCell $w={42}>插入</StatusCell>
        <StatusRight>
          <ViewGroup>
            <ViewBtn $on>
              <ViewLines />
            </ViewBtn>
            <ViewBtn>
              <ViewLines kind="book" />
            </ViewBtn>
            <ViewBtn>
              <ViewLines kind="web" />
            </ViewBtn>
            <ViewBtn>
              <ViewLines kind="outline" />
            </ViewBtn>
            <ViewBtn>
              <ViewLines kind="draft" />
            </ViewBtn>
          </ViewGroup>
          <ZoomLabel>110%</ZoomLabel>
          <ZoomRound>−</ZoomRound>
          <ZoomTrack>
            <ZoomThumb>
              <SliderThumb />
            </ZoomThumb>
          </ZoomTrack>
          <ZoomRound>+</ZoomRound>
          <ResizeGrip>
            <GripDots />
          </ResizeGrip>
        </StatusRight>
      </StatusBar>
      <DateDialog />
      <Callout>勾选“使用全角字符”</Callout>
      <Cursor>
        <Arrow />
      </Cursor>
      <Watermark>
        <WmCn>考无忧</WmCn>
        <WmEn>Easykao</WmEn>
      </Watermark>
    </Window>
  );
}
